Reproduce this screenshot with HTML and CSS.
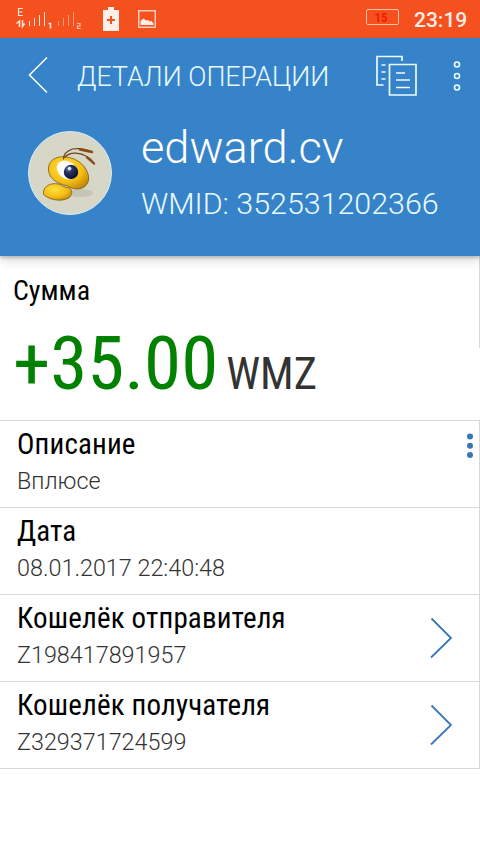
FILE: index.html
```html
<!DOCTYPE html>
<html lang="ru">
<head>
<meta charset="utf-8">
<title>Детали операции</title>
<link rel="stylesheet" href="styles.css">
</head>
<body>
<div class="status">
  <svg class="signals" width="70" height="24" viewBox="0 0 70 24" fill="none" stroke="#ffe4dc">
    <path d="M8 1.500H3.500V8.500H8M3.500 5H7.500" stroke-width="1.200"/>
    <path d="M4.500 20V14L1.500 16.500M7.500 13V19.500L9.500 16.500" stroke-width="1.500"/>
    <path d="M14.500 14v5M19.500 11v8M24.500 8v11M29.500 5v14"/>
    <path d="M33.500 16.500h2v5" stroke-width="1.600"/>
    <path d="M43.500 14v5M48.500 11v8M53.500 8v11M58.500 5v14" stroke="#fb9a79"/>
    <path d="M62 16.500h3v2.500h-2.500v2.500h3" stroke="#ffc0aa" stroke-width="1.200"/>
  </svg>
  <svg class="battery-saver" width="16" height="24" viewBox="0 0 16 24"><path d="M5 0h6v3h5v21H0V3h5z" fill="#ffeee9"/><path d="M8 9v8M4 13h8" stroke="#f5511e" stroke-width="2"/></svg>
  <svg class="picture" width="18" height="18" viewBox="0 0 18 18"><rect x=".75" y=".75" width="16.500" height="16.500" fill="none" stroke="#ffcdbb" stroke-width="1.500"/><path d="M2.500 15v-4l3-2.500 2.500 2 2-.5 1.500 1.500 2-.5 2 2.500v1.500z" fill="#ffeee9"/></svg>
  <span class="battery">15</span>
  <span class="clock">23:19</span>
</div>
<header class="header">
  <div class="toolbar">
    <svg class="back" width="20" height="38" viewBox="0 0 20 38"><path d="M19 .500 1.500 18l17.500 17.500" fill="none" stroke="#fff" stroke-width="1.500"/></svg>
    <h1 class="heading">ДЕТАЛИ ОПЕРАЦИИ</h1>
    <svg class="copy" width="42" height="42" viewBox="0 0 42 42" fill="none" stroke="#e9fbff" stroke-width="1.700"><path d="M7.500 30H1V1.500h25V6M13.500 9.500h26.500v30.500H13.500zM5.500 10h4M5.500 17h4M5.500 24h4M20 18h9M20 25h14M20 32.500h14"/></svg>
    <svg class="more" width="8" height="30" viewBox="0 0 8 30" fill="none" stroke="#e9fbff" stroke-width="1.600"><circle cx="4" cy="3.500" r="2.500"/><circle cx="4" cy="15" r="2.500"/><circle cx="4" cy="26.500" r="2.500"/></svg>
  </div>
  <div class="profile">
    <svg class="avatar" width="84" height="84" viewBox="0 0 84 84">
      <defs>
        <radialGradient id="gold" cx=".4" cy=".35" r=".75"><stop offset="0" stop-color="#ffdf3e"/><stop offset=".6" stop-color="#f4bd13"/><stop offset="1" stop-color="#bd8307"/></radialGradient>
        <radialGradient id="iris" cx=".35" cy=".3" r=".7"><stop offset="0" stop-color="#8790b4"/><stop offset=".35" stop-color="#2b335f"/><stop offset="1" stop-color="#0a102f"/></radialGradient>
      </defs>
      <circle cx="42" cy="42" r="41.500" fill="#d6d7c6" stroke="#d5eef8"/>
      <ellipse cx="53" cy="62" rx="12" ry="4" fill="#c5c5b5"/>
      <path d="M15.500 61C16 55 23 51.500 30 53c4 1 4 3 11 4 4 2 3 6 1 9-5 4-14 4-21 1-4-2-6-3-5.500-6z" fill="url(#gold)" stroke="#795b16" stroke-width=".8"/>
      <path d="M20.500 37C21 29 29 24.500 38 26c12 1 21 10 22.500 19 1 8-4 13-12 13-4 0-7-2-9-3-10-2-20-8-19-18z" fill="url(#gold)" stroke="#795b16" stroke-width=".8"/>
      <ellipse cx="39" cy="39" rx="11" ry="8.500" fill="#fafcff" transform="rotate(38 39 39)"/>
      <circle cx="43" cy="41" r="7.200" fill="url(#iris)"/><circle cx="41.500" cy="37.500" r="1.800" fill="#dfe4ed"/>
      <path d="M35.500 28c0-5 3-8 9-10 6-1 14 0 20 3M37 26c5-5 14-5 21-1 4 2 6 4 8.500 8" fill="none" stroke="#70421f" stroke-width="1.200" stroke-linecap="round"/>
      <path d="m52 18.500 12 2.500M59 26.500l7 6" stroke="#8c4b16" stroke-width="2.300" stroke-linecap="round"/>
    </svg>
    <div class="identity">
      <div class="name">edward.cv</div>
      <div class="wmid">WMID: 352531202366</div>
    </div>
  </div>
</header>
<main>
  <section class="sum">
    <h2 class="label">Сумма</h2>
    <div class="money"><span class="amount">+35.00</span><span class="unit">WMZ</span></div>
  </section>
  <section class="row">
    <div><h2 class="label">Описание</h2><p class="value">Вплюсе</p></div>
    <svg class="row-menu" width="6" height="26" viewBox="0 0 6 26" fill="#3777b8"><circle cx="3" cy="3.500" r="3"/><circle cx="3" cy="12.700" r="3"/><circle cx="3" cy="22" r="3"/></svg>
  </section>
  <section class="row">
    <div><h2 class="label">Дата</h2><p class="value">08.01.2017 22:40:48</p></div>
  </section>
  <section class="row">
    <div><h2 class="label">Кошелёк отправителя</h2><p class="value">Z198417891957</p></div>
    <svg class="chevron" width="22" height="42" viewBox="0 0 22 42"><path d="M1.500 1.500 21 21 1 40.500" fill="none" stroke="#3777b8" stroke-width="1.800"/></svg>
  </section>
  <section class="row">
    <div><h2 class="label">Кошелёк получателя</h2><p class="value">Z329371724599</p></div>
    <svg class="chevron" width="22" height="42" viewBox="0 0 22 42"><path d="M1.500 1.500 21 21 1 40.500" fill="none" stroke="#3777b8" stroke-width="1.800"/></svg>
  </section>
</main>
</body>
</html>
```
FILE: styles.css
```css
* { box-sizing: border-box; }
body { margin: 0; height: 854px; overflow: hidden; background: #fff; font-family: Roboto, sans-serif; }
h1, h2, p { margin: 0; }
svg { display: block; flex: none; }
.status { height: 38px; background: #f5511e; display: flex; align-items: flex-start; color: #ffeee9; }
.signals { margin: 7px 0 0 15px; }
.battery-saver { margin: 7px 0 0 18px; }
.picture { margin: 10px 0 0 19px; }
.battery { margin: 9px 0 0 210px; width: 33px; height: 16px; border: 1px solid #ffc0a8; border-radius: 2px; font: 600 13px/15px "Roboto Condensed", Roboto, sans-serif; color: #f51800; text-align: center; padding-right: 3px; }
.clock { margin: 7px 0 0 15px; font-size: 21px; font-weight: 500; line-height: 26px; white-space: nowrap; }
.header { height: 218px; background: #3783ca; color: #fff; box-shadow: 0 2px 3px #0003, 0 5px 10px #0002; position: relative; }
.toolbar { height: 76px; display: flex; align-items: center; padding-left: 28px; }
.heading { width: 253px; margin-left: 29px; padding-top: 1px; font-size: 26.8px; font-weight: 300; line-height: 32px; white-space: nowrap; color: #e9fbff; }
.copy { margin-left: 46px; }
.more { margin-left: 35px; }
.profile { display: flex; padding: 7px 0 0 28px; }
.avatar { margin-top: 10px; }
.identity { margin-left: 29px; white-space: nowrap; }
.name { font-size: 45.2px; font-weight: 300; line-height: 54px; }
.wmid { font-size: 30.4px; font-weight: 300; line-height: 36px; margin-top: 11px; color: #e9fbff; }
.sum { height: 164px; padding: 18px 0 0 13px; background: linear-gradient(#d8d8d8, #d8d8d8) right top / 1px 92px no-repeat; }
.label { font-family: "Roboto Condensed", Roboto, sans-serif; font-stretch: 75%; font-size: 28px; font-weight: 400; line-height: 34px; color: #000; white-space: nowrap; }
.money { display: flex; align-items: baseline; font-family: "Roboto Condensed", Roboto, sans-serif; font-stretch: 75%; line-height: 88px; margin-top: 11px; white-space: nowrap; }
.amount { font-size: 75px; color: #008200; }
.unit { font-size: 44.5px; color: #333; margin-left: 8px; }
.row { height: 87px; border-top: 1px solid #d8d8d8; border-right: 1px solid #d8d8d8; padding: 6px 0 0 17px; display: flex; justify-content: space-between; }
.row .label { font-size: 29px; letter-spacing: .15px; }
.row:last-child { height: 88px; border-bottom: 1px solid #d8d8d8; }
.value { font-size: 23.35px; font-weight: 300; line-height: 28px; margin-top: 6px; color: #333; }
.chevron { margin: 16px 27px 0 0; }
.row-menu { margin: 6px 6px 0 0; }
```
